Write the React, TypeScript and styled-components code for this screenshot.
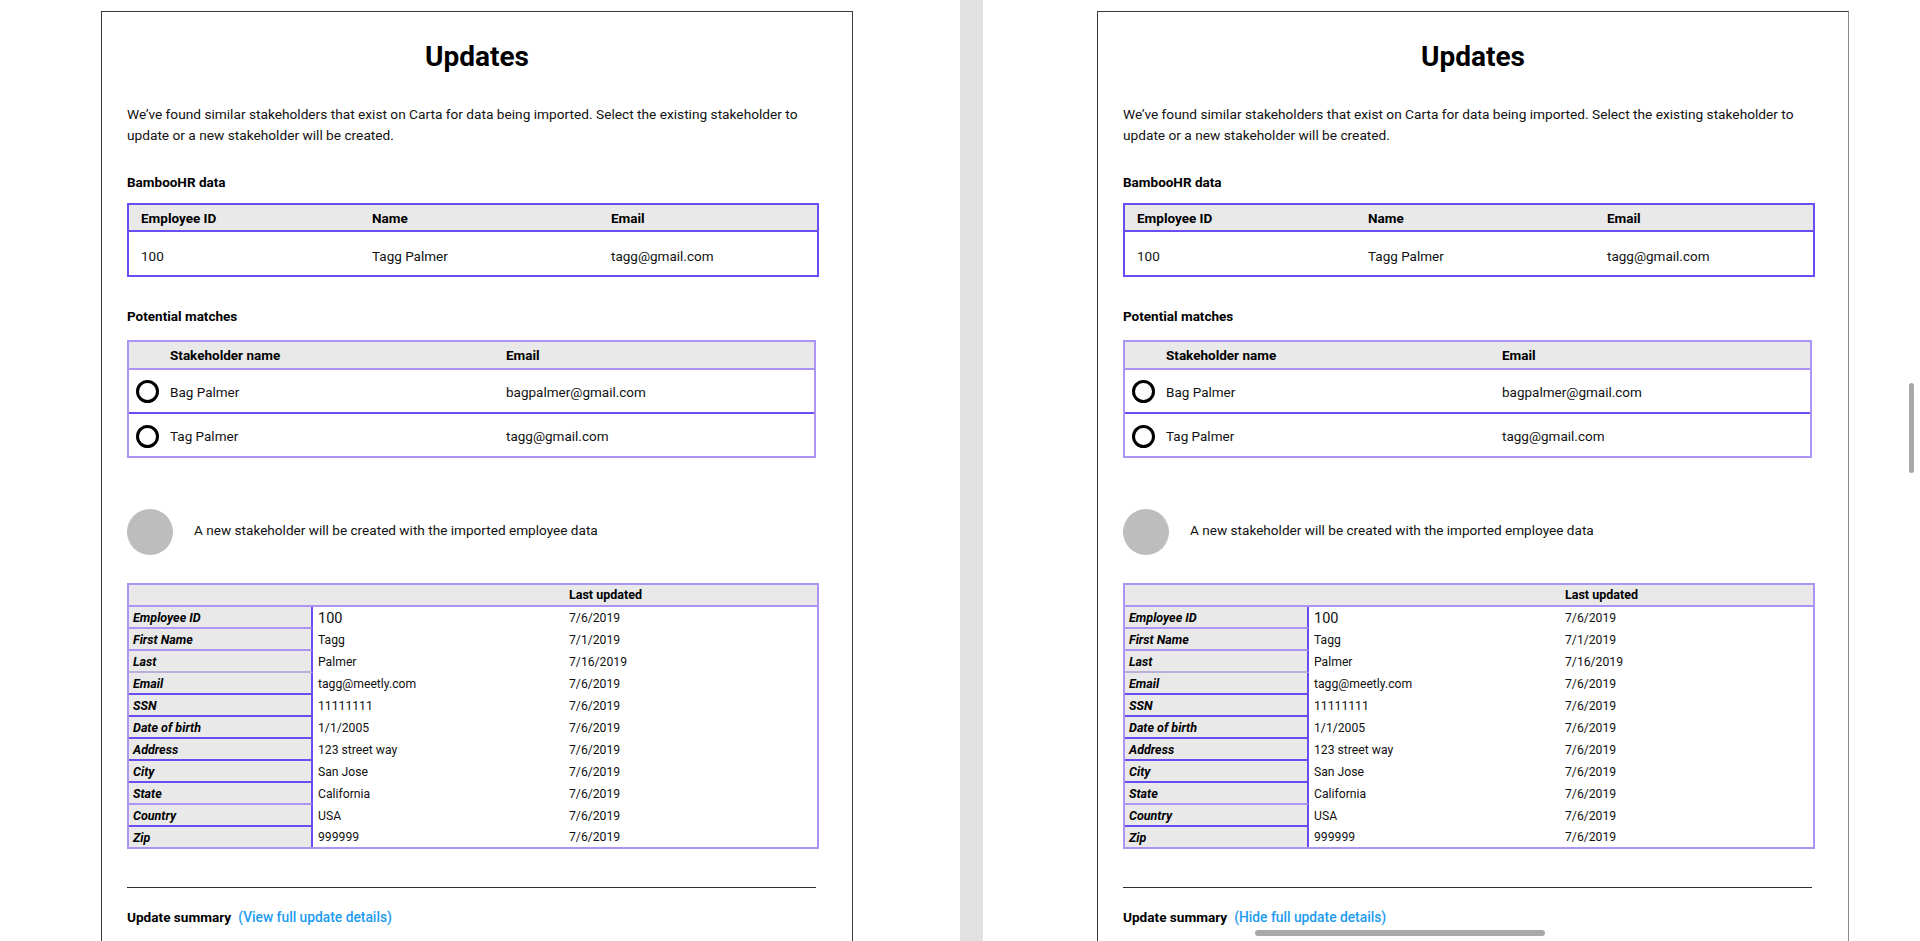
import React from "react";
import styled, { createGlobalStyle } from "styled-components";

const VIVID = "#6a4cf2";
const LAV = "#ab94f3";

const Global = createGlobalStyle`
  html, body { margin: 0; padding: 0; background: #fff; }
  body { font-family: Roboto, "Liberation Sans", Arial, sans-serif; color: #111; }
`;

const Screen = styled.div`
  position: relative;
  display: flex;
  width: 1920px;
  height: 941px;
  overflow: hidden;
  background: #fff;
`;

const Pane = styled.div<{ $padLeft: number; $width?: number }>`
  flex: ${(p) => (p.$width ? `0 0 ${p.$width}px` : "1 1 auto")};
  padding-left: ${(p) => p.$padLeft}px;
  padding-top: 11px;
  box-sizing: border-box;
`;

const Band = styled.div`
  flex: 0 0 23px;
  background: #e1e1e1;
`;

const Card = styled.section<{ $edge: string }>`
  width: 752px;
  min-height: 960px;
  box-sizing: border-box;
  border: 1px solid #3a3a3a;
  border-right-color: ${(p) => p.$edge};
  border-bottom: none;
  padding: 0 25px;
`;

const Title = styled.h1`
  margin: 28px 0 0;
  font-size: 28px;
  line-height: 34px;
  font-weight: 700;
  text-align: center;
  color: #000;
`;

const Intro = styled.p`
  margin: 30px 0 0;
  font-size: 13.7px;
  line-height: 21px;
  color: #111;
`;

const SectionLabel = styled.h2<{ $top: number }>`
  margin: ${(p) => p.$top}px 0 0;
  font-size: 13.5px;
  line-height: 20px;
  font-weight: 700;
  color: #000;
`;

const Table = styled.div<{ $border: string; $width: number; $top: number }>`
  margin-top: ${(p) => p.$top}px;
  width: ${(p) => p.$width}px;
  box-sizing: border-box;
  border: 2px solid ${(p) => p.$border};
`;

const Row = styled.div<{
  $cols: string;
  $height: number;
  $head?: boolean;
  $line?: string;
  $padTop?: number;
}>`
  display: grid;
  grid-template-columns: ${(p) => p.$cols};
  align-items: center;
  height: ${(p) => p.$height}px;
  box-sizing: border-box;
  padding-top: ${(p) => p.$padTop ?? 0}px;
  background: ${(p) => (p.$head ? "#e9e9e9" : "#fff")};
  border-bottom: ${(p) => (p.$line ? `2px solid ${p.$line}` : "none")};
  font-size: 13.5px;
  font-weight: ${(p) => (p.$head ? 700 : 400)};
  color: ${(p) => (p.$head ? "#000" : "#111")};
`;

const Cell = styled.div<{ $pad?: number }>`
  padding-left: ${(p) => p.$pad ?? 12}px;
  white-space: nowrap;
`;

const Radio = styled.span`
  display: block;
  width: 23px;
  height: 23px;
  box-sizing: border-box;
  border: 3px solid #000;
  border-radius: 50%;
  margin-left: 7px;
`;

const NewRow = styled.div`
  margin-top: 51px;
  display: flex;
  align-items: center;
  gap: 21px;
  font-size: 13.6px;
  color: #111;
`;

const Avatar = styled.span`
  flex: 0 0 46px;
  height: 46px;
  border-radius: 50%;
  background: #bdbdbd;
`;

const NewText = styled.span`
  margin-top: -5px;
`;

const DetailTable = styled.div`
  margin-top: 28px;
  width: 692px;
  box-sizing: border-box;
  border: 2px solid ${LAV};
`;

const DetailHead = styled.div`
  display: grid;
  grid-template-columns: 184px 256px 1fr;
  height: 22px;
  box-sizing: border-box;
  border-bottom: 2px solid ${LAV};
  background: #e9e9e9;
  font-size: 12.5px;
  font-weight: 700;
  line-height: 20px;
  color: #000;
`;

const DetailRow = styled.div`
  display: grid;
  grid-template-columns: 184px 256px 1fr;
  align-items: stretch;
`;

const DetailLabel = styled.div<{ $line: string | null; $last?: boolean }>`
  height: ${(p) => (p.$last ? 20 : 22)}px;
  box-sizing: border-box;
  background: #e9e9e9;
  border-right: 2px solid ${VIVID};
  border-bottom: ${(p) => (p.$line ? `2px solid ${p.$line}` : "none")};
  padding-left: 4px;
  display: flex;
  align-items: center;
  font-size: 12.5px;
  font-weight: 700;
  font-style: italic;
  color: #000;
`;

const DetailValue = styled.div<{ $big?: boolean }>`
  display: flex;
  align-items: center;
  padding-left: 5px;
  font-size: ${(p) => (p.$big ? "14.5px" : "12.2px")};
  color: #111;
  white-space: nowrap;
`;

const DetailDate = styled.div`
  display: flex;
  align-items: center;
  font-size: 12.2px;
  color: #111;
`;

const Rule = styled.hr`
  margin: 38px 0 0;
  width: 689px;
  border: none;
  border-top: 1px solid #2e2e2e;
`;

const Summary = styled.div`
  margin-top: 19px;
  display: flex;
  align-items: baseline;
  gap: 7px;
  line-height: 20px;
`;

const SummaryLabel = styled.span`
  font-size: 13.6px;
  font-weight: 700;
  color: #000;
`;

const SummaryLink = styled.a`
  font-size: 13.8px;
  font-weight: 500;
  color: #1d9bf0;
  text-decoration: none;
  cursor: pointer;
`;

const HScroll = styled.div`
  position: absolute;
  left: 1255px;
  top: 930px;
  width: 290px;
  height: 6px;
  border-radius: 3px;
  background: #a9a9a9;
`;

const VScroll = styled.div`
  position: absolute;
  left: 1909px;
  top: 383px;
  width: 5px;
  height: 90px;
  border-radius: 3px;
  background: #a9a9a9;
`;

type Detail = { label: string; value: string; date: string; line: string | null; big?: boolean };

const details: Detail[] = [
  { label: "Employee ID", value: "100", date: "7/6/2019", line: LAV, big: true },
  { label: "First Name", value: "Tagg", date: "7/1/2019", line: LAV },
  { label: "Last", value: "Palmer", date: "7/16/2019", line: "#b9b0d8" },
  { label: "Email", value: "tagg@meetly.com", date: "7/6/2019", line: VIVID },
  { label: "SSN", value: "11111111", date: "7/6/2019", line: VIVID },
  { label: "Date of birth", value: "1/1/2005", date: "7/6/2019", line: VIVID },
  { label: "Address", value: "123 street way", date: "7/6/2019", line: VIVID },
  { label: "City", value: "San Jose", date: "7/6/2019", line: VIVID },
  { label: "State", value: "California", date: "7/6/2019", line: LAV },
  { label: "Country", value: "USA", date: "7/6/2019", line: VIVID },
  { label: "Zip", value: "999999", date: "7/6/2019", line: null },
];

const matches = [
  { name: "Bag Palmer", email: "bagpalmer@gmail.com" },
  { name: "Tag Palmer", email: "tagg@gmail.com" },
];

function UpdatesCard({ linkText, edge }: { linkText: string; edge: string }) {
  return (
    <Card $edge={edge}>
      <Title>Updates</Title>
      <Intro>
        We’ve found similar stakeholders that exist on Carta for data being imported. Select the existing
        stakeholder to update or a new stakeholder will be created.
      </Intro>

      <SectionLabel $top={26}>BambooHR data</SectionLabel>
      <Table $border={VIVID} $width={692} $top={11}>
        <Row $cols="231px 239px 1fr" $height={27} $head $line={VIVID}>
          <Cell>Employee ID</Cell>
          <Cell>Name</Cell>
          <Cell>Email</Cell>
        </Row>
        <Row $cols="231px 239px 1fr" $height={43} $padTop={4}>
          <Cell>100</Cell>
          <Cell>Tagg Palmer</Cell>
          <Cell>tagg@gmail.com</Cell>
        </Row>
      </Table>

      <SectionLabel $top={29}>Potential matches</SectionLabel>
      <Table $border={LAV} $width={689} $top={14}>
        <Row $cols="41px 336px 1fr" $height={28} $head $line={LAV}>
          <Cell $pad={0} />
          <Cell $pad={0}>Stakeholder name</Cell>
          <Cell $pad={0}>Email</Cell>
        </Row>
        {matches.map((m, i) => (
          <Row
            key={m.name}
            $cols="41px 336px 1fr"
            $height={i === 0 ? 44 : 42}
            $line={i === 0 ? VIVID : undefined}
            $padTop={i === 0 ? 1 : 2}
          >
            <Cell $pad={0}>
              <Radio />
            </Cell>
            <Cell $pad={0}>{m.name}</Cell>
            <Cell $pad={0}>{m.email}</Cell>
          </Row>
        ))}
      </Table>

      <NewRow>
        <Avatar />
        <NewText>A new stakeholder will be created with the imported employee data</NewText>
      </NewRow>

      <DetailTable>
        <DetailHead>
          <span />
          <span />
          <span>Last updated</span>
        </DetailHead>
        {details.map((d, i) => (
          <DetailRow key={d.label}>
            <DetailLabel $line={d.line} $last={i === details.length - 1}>
              {d.label}
            </DetailLabel>
            <DetailValue $big={d.big}>{d.value}</DetailValue>
            <DetailDate>{d.date}</DetailDate>
          </DetailRow>
        ))}
      </DetailTable>

      <Rule />
      <Summary>
        <SummaryLabel>Update summary</SummaryLabel>
        <SummaryLink>{linkText}</SummaryLink>
      </Summary>
    </Card>
  );
}

export default function App() {
  return (
    <>
      <Global />
      <Screen>
        <Pane $padLeft={101} $width={960}>
          <UpdatesCard linkText="(View full update details)" edge="#3a3a3a" />
        </Pane>
        <Band />
        <Pane $padLeft={114}>
          <UpdatesCard linkText="(Hide full update details)" edge="#8a8a8a" />
        </Pane>
        <HScroll />
        <VScroll />
      </Screen>
    </>
  );
}
